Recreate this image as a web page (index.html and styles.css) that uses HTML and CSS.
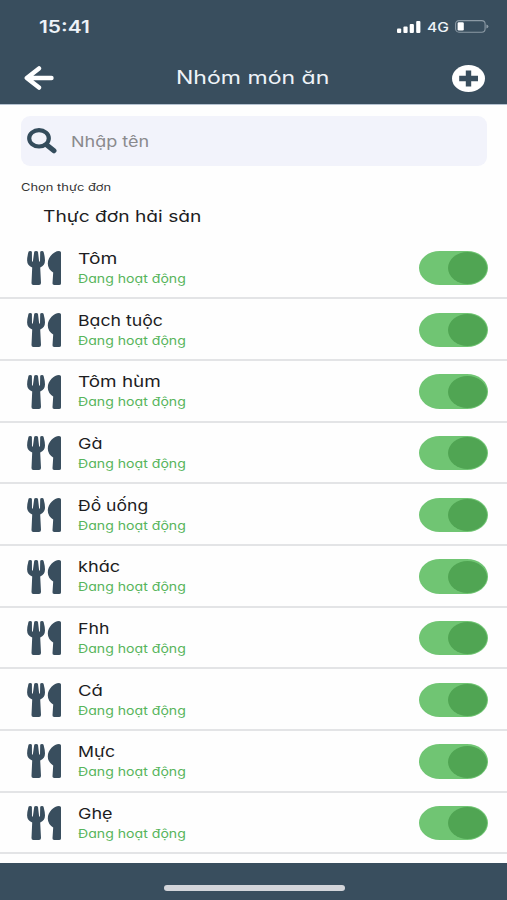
FILE: index.html
```html
<!DOCTYPE html>
<html lang="vi">
<head>
<meta charset="utf-8">
<title>Nhóm món ăn</title>
<link rel="stylesheet" href="styles.css">
</head>
<body>
<svg width="0" height="0" class="defs" aria-hidden="true">
  <symbol id="utensils" viewBox="0 0 34 34" preserveAspectRatio="none">
    <path d="M1.5.7Q1.8 0 3.2 0Q4.8 0 4.9 1L5 10.3Q5.4 11 5.9 10.3L7.2 1Q7.3 0 9.1 0Q10.8 0 11 1L12.1 10.3Q12.6 11 13 10.3L13.2 1Q13.3 0 15 0Q16.4 0 16.6.9Q18 6 18 9.5Q18 14.3 13.2 16.5L14 32Q14 34 12 34H6.3Q4.4 34 4.5 32L5.2 16.5Q.1 14.3.1 9.5Q.1 6 1.5.7Z"/>
    <path d="M32 0Q34 0 34 1.6V32.4Q34 34 32 34H27.2Q25.3 34 25.5 32.2L26.2 21.5Q20.8 18 20.8 12.5C20.8 6 27 0 32 0Z"/>
  </symbol>
</svg>
<header class="top">
  <div class="status">
    <span class="tx clock">15:41</span>
    <div class="indicators">
      <svg class="signal" viewBox="0 0 24 12"><rect x="0" y="7.5" width="4.2" height="4.5" rx="1"/><rect x="6.4" y="5.6" width="4.2" height="6.4" rx="1"/><rect x="12.7" y="3" width="4.2" height="9" rx="1"/><rect x="19.2" y="0" width="4.2" height="12" rx="1"/></svg>
      <span class="tx network">4G</span>
      <svg class="battery" viewBox="0 0 34 13"><rect class="shell" x=".6" y=".6" width="29.5" height="11.6" rx="3.4"/><rect x="2.6" y="2.2" width="6.2" height="8.4" rx="1.3"/><path class="tip" d="M31.4 4.4Q33.4 4.8 33.4 6.4T31.4 8.4Z"/></svg>
    </div>
  </div>
  <div class="bar">
    <svg class="back" viewBox="0 0 30 24"><path d="M15 2.4L2.8 12L15 21.6M3.5 12H27.5"/></svg>
    <h1><span class="tx title">Nhóm món ăn</span></h1>
    <svg class="add" viewBox="0 0 33 27"><ellipse cx="16.5" cy="13.5" rx="16.5" ry="13.5"/><path d="M7.2 13.5H26M16.5 5.6V21.4"/></svg>
  </div>
</header>
<main>
  <div class="search">
    <svg viewBox="0 0 30 26"><ellipse cx="12" cy="10.3" rx="9.8" ry="8.2"/><path class="handle" d="M19.8 17L27 22.8"/></svg>
    <span class="tx placeholder">Nhập tên</span>
  </div>
  <div class="label"><span class="tx">Chọn thực đơn</span></div>
  <div class="menu"><span class="tx">Thực đơn hải sản</span></div>
  <ul class="list" id="list"></ul>
</main>
<footer><div class="home"></div></footer>
<script src="app.js"></script>
</body>
</html>
```
FILE: styles.css
```css
* { box-sizing: border-box; }
body { margin: 0; width: 507px; height: 900px; overflow: hidden; display: flex; flex-direction: column; background: #fefefe; color: #1d1d1f; font-family: Inter, "Open Sans", sans-serif; font-feature-settings: "cv11"; }
.defs { position: absolute; }
.tx { display: inline-block; white-space: nowrap; transform-origin: 0 50%; transform: scaleX(var(--stretch, 1.2)); }
svg { display: block; flex: none; }

.top { height: 105px; flex: none; background: #394e5e; color: #eef3f8; border-bottom: 1px solid #b5c2d0; }
.status { height: 53px; padding: 0 18px 0 39px; display: flex; align-items: center; justify-content: space-between; }
.clock { font-size: 17px; font-weight: 600; --stretch: 1.23; }
.indicators { display: flex; align-items: center; }
.signal { width: 24px; height: 12px; fill: #fff; margin-right: 6px; }
.network { width: 28px; font-size: 13px; font-weight: 500; --stretch: 1.2; }
.battery { width: 34px; height: 13px; fill: #fff; }
.battery .shell { fill: none; stroke: #8c9aa5; stroke-width: 1.1; }
.battery .tip { fill: #8c9aa5; }
.bar { height: 50px; padding: 0 22px 0 24px; display: flex; align-items: center; justify-content: space-between; }
.back { width: 30px; height: 24px; fill: none; stroke: #fff; stroke-width: 4.4; stroke-linecap: round; stroke-linejoin: round; }
h1 { margin: 0; width: 155px; font-size: 18px; font-weight: 400; line-height: 24px; }
.title { --stretch: 1.28; }
.add { width: 33px; height: 27px; fill: #fff; stroke: none; }
.add path { stroke: #394e5e; stroke-width: 5.4; }

main { flex: 1; }
.search { margin: 11px 20px 0 21px; height: 50px; border-radius: 9px; background: #f2f3fb; display: flex; align-items: center; padding-left: 6px; }
.search svg { width: 30px; height: 26px; margin-right: 14px; fill: none; stroke: #344c5c; stroke-width: 4.2; }
.search .handle { stroke-width: 5; stroke-linecap: round; }
.placeholder { font-size: 15px; color: #8a8a8d; }
.label { margin: 13px 0 0 21px; height: 16px; font-size: 10.5px; line-height: 18px; color: #333; --stretch: 1.23; }
.menu { margin: 9px 0 0 43px; height: 24px; font-size: 16px; line-height: 24px; }
.list { list-style: none; margin: 9.6px 0 0; padding: 0; }
.row { height: 61.67px; border-bottom: 2px solid #e3e4e6; padding: 1.6px 19px 0 27px; display: flex; align-items: center; }
.utensils { width: 34px; height: 34px; margin-right: 17px; fill: #394e5e; }
.text { flex: 1; padding-top: 1.6px; }
.name, .state { height: 20px; line-height: 20px; }
.name { font-size: 15px; }
.state { font-size: 12px; color: #58b55c; --stretch: 1.175; }
.toggle { width: 69.5px; height: 34.5px; padding: 1.3px 1px; border-radius: 21px / 17.25px; background: #70c573; display: flex; justify-content: flex-end; }
.knob { width: 39px; height: 32px; border-radius: 50%; background: #50a553; }

footer { height: 37px; flex: none; padding-top: 22px; background: #394e5e; }
.home { width: 181px; height: 6px; margin: 0 0 0 164px; border-radius: 3px; background: #d3d5da; }
```
FILE: app.js
```js
// Dish group name and the horizontal stretch of its lettering.
const groups = [
  ["Tôm", 1.28], ["Bạch tuộc", 1.18], ["Tôm hùm", 1.26], ["Gà", 1.2], ["Đồ uống", 1.17],
  ["khác", 1.21], ["Fhh", 1.18], ["Cá", 1.24], ["Mực", 1.18], ["Ghẹ", 1.2]
];
document.getElementById("list").innerHTML = groups.map(([name, stretch]) => `
  <li class="row">
    <svg class="utensils"><use href="#utensils"/></svg>
    <div class="text">
      <div class="name"><span class="tx" style="--stretch:${stretch}">${name}</span></div>
      <div class="state"><span class="tx">Đang hoạt động</span></div>
    </div>
    <div class="toggle"><div class="knob"></div></div>
  </li>`).join("");
```
